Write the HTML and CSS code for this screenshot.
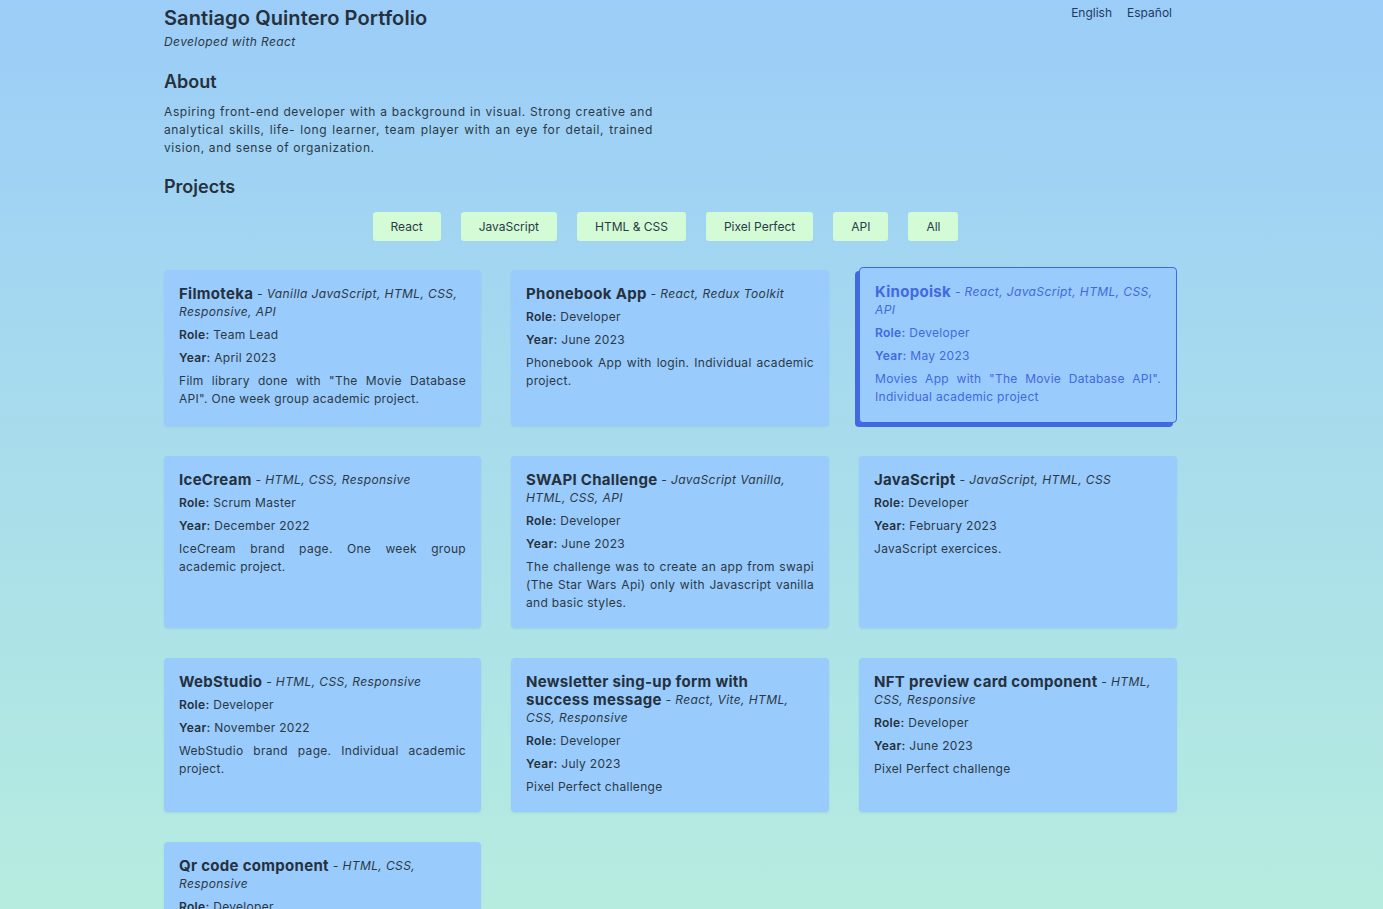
FILE: index.html
```html
<!DOCTYPE html>
<html lang="en">
<head>
<meta charset="utf-8">
<title>Santiago Quintero Portfolio</title>
<link rel="stylesheet" href="styles.css">
</head>
<body>
<div class="page">
  <header class="header">
    <div>
      <h1 class="title">Santiago Quintero Portfolio</h1>
      <p class="subtitle">Developed with React</p>
    </div>
    <nav class="langs">
      <a class="lang">English</a>
      <a class="lang">Español</a>
    </nav>
  </header>

  <h2 class="section about-title">About</h2>
  <p class="about">Aspiring front-end developer with a background in visual. Strong creative and analytical skills, life- long learner, team player with an eye for detail, trained vision, and sense of organization.</p>

  <h2 class="section projects-title">Projects</h2>
  <div class="filters">
    <button class="filter">React</button>
    <button class="filter">JavaScript</button>
    <button class="filter">HTML &amp; CSS</button>
    <button class="filter">Pixel Perfect</button>
    <button class="filter">API</button>
    <button class="filter">All</button>
  </div>

  <div class="grid">
    <article class="card">
      <h3 class="card-title">Filmoteka <span class="tech">- Vanilla JavaScript, HTML, CSS, Responsive, API</span></h3>
      <p class="line"><b>Role:</b> Team Lead</p>
      <p class="line"><b>Year:</b> April 2023</p>
      <p class="line desc">Film library done with "The Movie Database API". One week group academic project.</p>
    </article>
    <article class="card">
      <h3 class="card-title">Phonebook App <span class="tech">- React, Redux Toolkit</span></h3>
      <p class="line"><b>Role:</b> Developer</p>
      <p class="line"><b>Year:</b> June 2023</p>
      <p class="line desc">Phonebook App with login. Individual academic project.</p>
    </article>
    <article class="card card-active">
      <h3 class="card-title">Kinopoisk <span class="tech">- React, JavaScript, HTML, CSS, API</span></h3>
      <p class="line"><b>Role:</b> Developer</p>
      <p class="line"><b>Year:</b> May 2023</p>
      <p class="line desc">Movies App with "The Movie Database API". Individual academic project</p>
    </article>

    <article class="card">
      <h3 class="card-title">IceCream <span class="tech">- HTML, CSS, Responsive</span></h3>
      <p class="line"><b>Role:</b> Scrum Master</p>
      <p class="line"><b>Year:</b> December 2022</p>
      <p class="line desc">IceCream brand page. One week group academic project.</p>
    </article>
    <article class="card">
      <h3 class="card-title">SWAPI Challenge <span class="tech">- JavaScript Vanilla, HTML, CSS, API</span></h3>
      <p class="line"><b>Role:</b> Developer</p>
      <p class="line"><b>Year:</b> June 2023</p>
      <p class="line desc">The challenge was to create an app from swapi (The Star Wars Api) only with Javascript vanilla and basic styles.</p>
    </article>
    <article class="card">
      <h3 class="card-title">JavaScript <span class="tech">- JavaScript, HTML, CSS</span></h3>
      <p class="line"><b>Role:</b> Developer</p>
      <p class="line"><b>Year:</b> February 2023</p>
      <p class="line desc">JavaScript exercices.</p>
    </article>

    <article class="card">
      <h3 class="card-title">WebStudio <span class="tech">- HTML, CSS, Responsive</span></h3>
      <p class="line"><b>Role:</b> Developer</p>
      <p class="line"><b>Year:</b> November 2022</p>
      <p class="line desc">WebStudio brand page. Individual academic project.</p>
    </article>
    <article class="card">
      <h3 class="card-title">Newsletter sing-up form with success message <span class="tech">- React, Vite, HTML, CSS, Responsive</span></h3>
      <p class="line"><b>Role:</b> Developer</p>
      <p class="line"><b>Year:</b> July 2023</p>
      <p class="line desc">Pixel Perfect challenge</p>
    </article>
    <article class="card">
      <h3 class="card-title">NFT preview card component <span class="tech">- HTML, CSS, Responsive</span></h3>
      <p class="line"><b>Role:</b> Developer</p>
      <p class="line"><b>Year:</b> June 2023</p>
      <p class="line desc">Pixel Perfect challenge</p>
    </article>

    <article class="card">
      <h3 class="card-title">Qr code component <span class="tech">- HTML, CSS, Responsive</span></h3>
      <p class="line"><b>Role:</b> Developer</p>
      <p class="line"><b>Year:</b> June 2023</p>
      <p class="line desc">Pixel Perfect challenge</p>
    </article>
  </div>
</div>
</body>
</html>
```
FILE: styles.css
```css
* { box-sizing: border-box; }

html, body {
  margin: 0;
  padding: 0;
}

body {
  font-family: Inter, "Noto Sans", "Liberation Sans", sans-serif;
  color: #25313c;
  background: linear-gradient(to bottom, #9bcdf8 0%, #b9f0dc 100%);
  min-height: 100vh;
}

.page {
  width: 1013px;
  margin-left: 164px;
  padding-bottom: 40px;
}

.header {
  display: flex;
  justify-content: space-between;
  align-items: flex-start;
}

.title {
  margin: 6px 0 0;
  font-size: 20px;
  line-height: 24px;
  font-weight: 600;
  letter-spacing: 0.1px;
  color: #25313c;
}

.subtitle {
  margin: 4px 0 0;
  font-size: 12px;
  line-height: 16px;
  font-style: italic;
  letter-spacing: 0.4px;
  color: #2b3945;
}

.langs {
  display: flex;
  gap: 15px;
  padding: 5px 5px 0 0;
}

.lang {
  font-size: 12px;
  line-height: 16px;
  color: #1f3a5f;
  cursor: pointer;
}

.section {
  margin: 0;
  font-size: 18px;
  line-height: 22px;
  font-weight: 600;
  color: #25313c;
}

.about-title { margin-top: 21px; }

.about {
  width: 489px;
  margin: 10px 0 0;
  font-size: 12px;
  line-height: 18px;
  letter-spacing: 0.6px;
  text-align: justify;
  color: #2b3945;
}

.projects-title { margin-top: 19px; }

.filters {
  display: flex;
  justify-content: center;
  gap: 20px;
  margin-top: 14px;
  padding-right: 10px;
}

.filter {
  height: 29px;
  padding: 0 18px;
  border: none;
  border-radius: 3px;
  background: #d3fbd5;
  font-family: Inter, "Noto Sans", "Liberation Sans", sans-serif;
  font-size: 12px;
  color: #2a3a46;
  cursor: pointer;
}

.grid {
  display: grid;
  grid-template-columns: 317px 318px 318px;
  column-gap: 30px;
  row-gap: 30px;
  margin-top: 29px;
}

.card {
  background: #99cbfc;
  border-radius: 4px;
  padding: 15px 15px 16px;
  box-shadow: 0 1px 2px rgba(60, 100, 140, 0.12);
}

.card-title {
  margin: 0;
  font-size: 15px;
  line-height: 18px;
  font-weight: 700;
  letter-spacing: 0.3px;
  color: #25313c;
}

.tech {
  font-size: 12px;
  line-height: 18px;
  font-weight: 400;
  font-style: italic;
  letter-spacing: 0.4px;
  color: #2b3945;
  vertical-align: top;
}

.line {
  margin: 5px 0 0;
  font-size: 12px;
  line-height: 18px;
  letter-spacing: 0.3px;
  color: #2b3945;
}

.line b { font-weight: 600; color: #25313c; }

.desc {
  text-align: justify;
}

.card-active {
  border: 1px solid #4169e1;
  transform: translateY(-3px);
  box-shadow: -4px 4px 0 #4169e1;
}

.card-active .card-title,
.card-active .tech,
.card-active .line,
.card-active .line b {
  color: #4169e1;
}
```
